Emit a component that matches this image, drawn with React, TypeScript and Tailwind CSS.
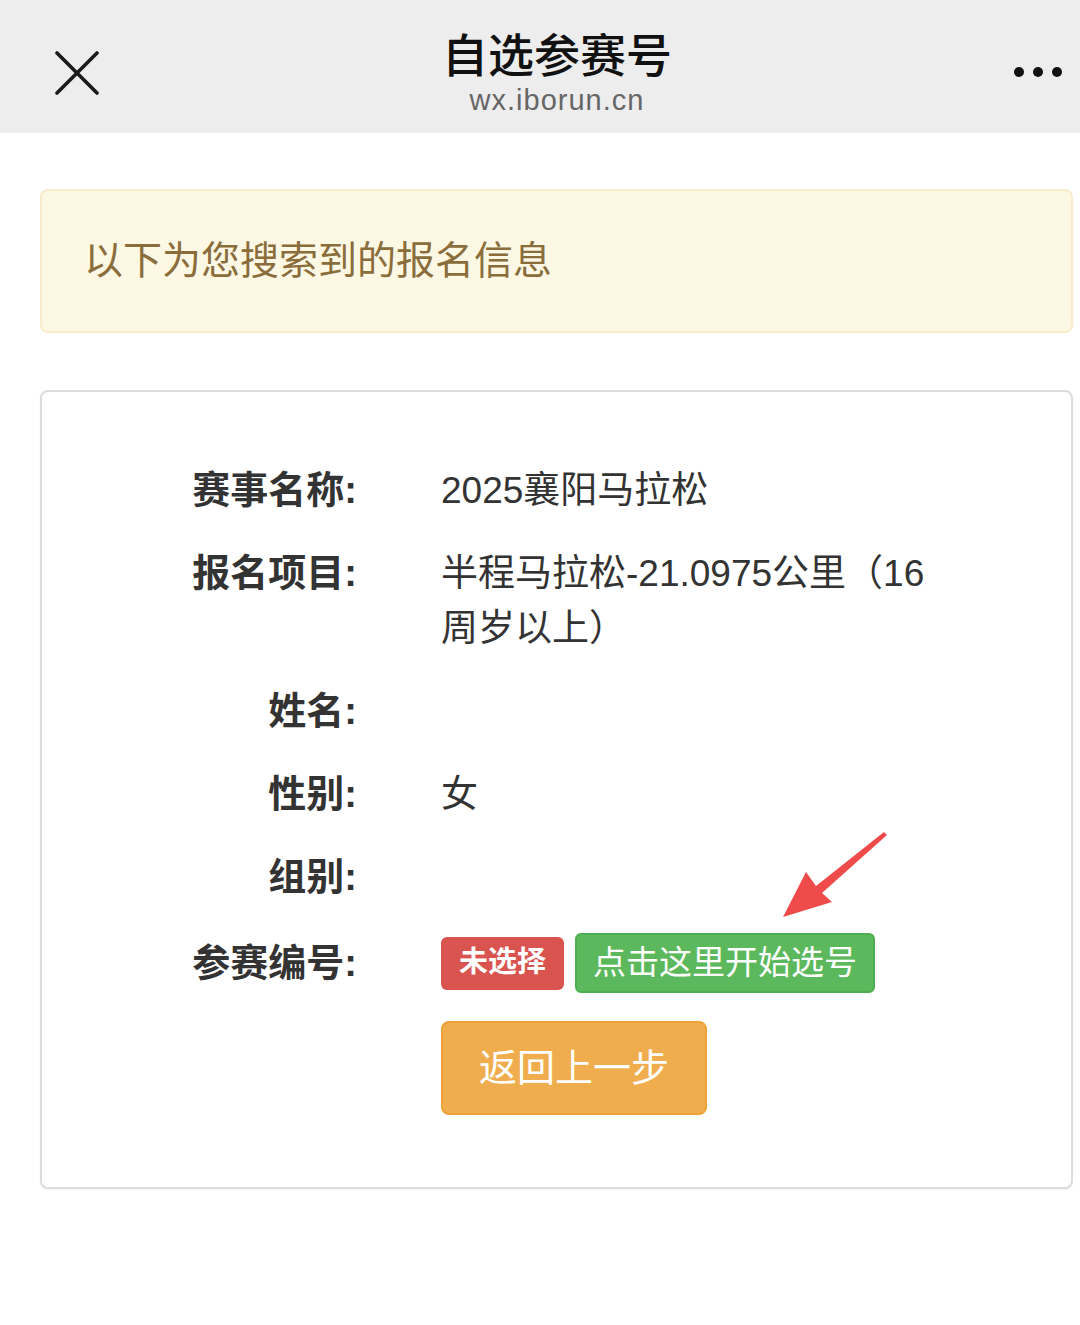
const font = { fontFamily: '"Liberation Sans", "Noto Sans CJK SC", sans-serif' };

const Row = ({ label, children }: { label: string; children?: React.ReactNode }) => (
  <>
    <div className="text-right text-[38px] leading-[55px] font-bold text-[#333]">{label}</div>
    <div className="text-[37px] leading-[55px] text-[#333]">{children}</div>
  </>
);

export default function App() {
  return (
    <div className="relative w-[1080px] min-h-[1325px] bg-white" style={font}>
      {/* top bar */}
      <div className="relative flex h-[133px] items-center justify-between bg-[#ededed] px-[55px]">
        <svg width="44" height="44" viewBox="0 0 44 44" className="mt-[12px]">
          <path d="M2 2 L42 42 M42 2 L2 42" stroke="#1a1a1a" strokeWidth="3.6" strokeLinecap="round" />
        </svg>
        <div className="absolute left-[34px] right-0 top-[27px] flex flex-col items-center">
          <div className="text-[46px] leading-[58px] font-medium text-[#111]">自选参赛号</div>
          <div className="text-[29px] leading-[30px] tracking-[1px] text-[#666]">wx.iborun.cn</div>
        </div>
        <div className="mr-[-37px] mt-[10px] flex gap-[9px]">
          <span className="h-[10px] w-[10px] rounded-full bg-[#111]" />
          <span className="h-[10px] w-[10px] rounded-full bg-[#111]" />
          <span className="h-[10px] w-[10px] rounded-full bg-[#111]" />
        </div>
      </div>

      {/* notice */}
      <div className="ml-[40px] mt-[56px] flex h-[144px] w-[1033px] items-center rounded-[8px] border-2 border-[#faebcc] bg-[#fcf8e3] pl-[42px]">
        <span className="text-[39px] text-[#8a6d3b]">以下为您搜索到的报名信息</span>
      </div>

      {/* info card */}
      <div className="ml-[40px] mt-[57px] w-[1033px] rounded-[8px] border-2 border-[#dcdcdc] bg-white pt-[71px] pb-[72px] shadow-[0_1px_2px_rgba(0,0,0,0.06)]">
        <div className="grid grid-cols-[315px_500px] gap-x-[84px] gap-y-[28px]">
          <Row label="赛事名称:">2025襄阳马拉松</Row>
          <Row label="报名项目:">半程马拉松-21.0975公里（16周岁以上）</Row>
          <Row label="姓名:" />
          <Row label="性别:">女</Row>
          <Row label="组别:" />
          <div className="self-center text-right text-[38px] leading-[55px] font-bold text-[#333]">参赛编号:</div>
          <div className="flex items-center gap-[11px]">
            <span className="flex h-[53px] items-center rounded-[6px] bg-[#d9534f] px-[18px] text-[29px] font-bold text-white">未选择</span>
            <span className="flex h-[60px] items-center rounded-[6px] border-2 border-[#4cae4c] bg-[#5cb85c] px-[16px] text-[33px] text-white">点击这里开始选号</span>
          </div>
          <div />
          <div>
            <span className="flex h-[94px] w-[266px] items-center justify-center rounded-[8px] border-2 border-[#eea236] bg-[#f0ad4e] text-[38px] text-white">返回上一步</span>
          </div>
        </div>
      </div>

      {/* hint arrow drawn over the card */}
      <svg className="absolute left-0 top-0" width="1080" height="1325" viewBox="0 0 1080 1325">
        <polygon points="783,917 806,872 816,886 884,832 887,835 822,893 832,902" fill="#f04b4b" />
      </svg>
    </div>
  );
}
